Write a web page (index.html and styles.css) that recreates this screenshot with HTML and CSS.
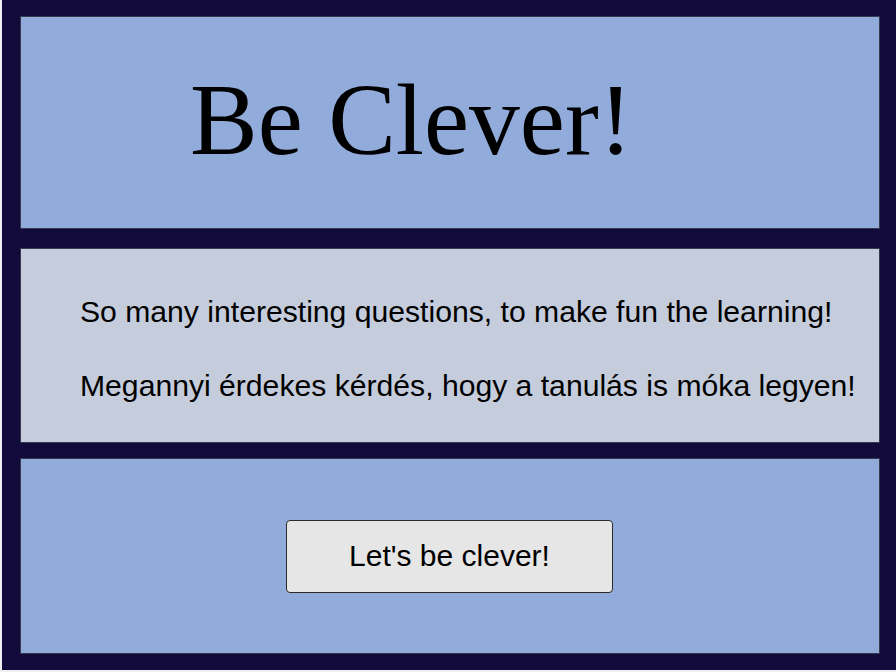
FILE: index.html
```html
<!DOCTYPE html>
<html lang="en">
<head>
<meta charset="utf-8">
<title>Be Clever!</title>
<link rel="stylesheet" href="styles.css">
</head>
<body>
<div class="frame">
  <header class="panel panel-title">
    <h1 class="title">Be Clever!</h1>
  </header>
  <section class="panel panel-text">
    <p class="line">So many interesting questions, to make fun the learning!</p>
    <p class="line">Megannyi érdekes kérdés, hogy a tanulás is móka legyen!</p>
  </section>
  <section class="panel panel-action">
    <button class="start" type="button">Let's be clever!</button>
  </section>
</div>
</body>
</html>
```
FILE: styles.css
```css
html, body {
  margin: 0;
  padding: 0;
}
body {
  background: #f0f0f0;
  width: 896px;
  height: 672px;
  overflow: hidden;
}
.frame {
  margin-left: 2px;
  width: 894px;
  height: 670px;
  box-sizing: border-box;
  background: #110a3b;
  padding: 16px 0 16px 18px;
  display: flex;
  flex-direction: column;
}
.panel {
  flex-shrink: 0;
  width: 860px;
  box-sizing: border-box;
  border: 1px solid #353a50;
}
.panel-title {
  height: 213px;
  background: #91abdb;
  margin-bottom: 19px;
}
.title {
  margin: 0;
  padding: 45px 0 0 169px;
  font-family: "Liberation Serif", "Times New Roman", serif;
  font-weight: normal;
  font-size: 101.5px;
  line-height: 117px;
  color: #000;
}
.panel-text {
  height: 195px;
  background: #c5ccdb;
  margin-bottom: 15px;
  padding: 46px 0 0 59px;
  display: flex;
  flex-direction: column;
  gap: 40px;
}
.line {
  margin: 0;
  font-family: "Liberation Sans", Arial, sans-serif;
  font-size: 30.15px;
  line-height: 34px;
  color: #000;
}
.panel-action {
  height: 196px;
  background: #91abdb;
  display: flex;
  align-items: center;
  justify-content: center;
}
.start {
  width: 327px;
  height: 73px;
  background: #e6e6e6;
  border: 1px solid #2a2a2a;
  border-radius: 4px;
  font-family: "Liberation Sans", Arial, sans-serif;
  font-size: 30px;
  color: #000;
  padding: 0;
  margin-left: -1px;
}
```
